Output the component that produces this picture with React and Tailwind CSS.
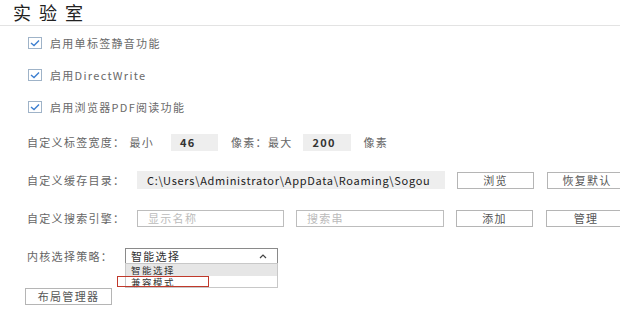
import React from "react";

const F = "font-['Noto_Sans_CJK_SC','Noto_Sans',sans-serif]";

function Check({ label }) {
  return (
    <div className="h-[32px] flex items-center pl-[28px]">
      <div className="w-[14px] h-[12px] border border-[#9fb3c8] bg-white flex items-center justify-center">
        <svg width="10" height="8" viewBox="0 0 10 8">
          <path d="M1 4 L4 6.5 L9 1.5" fill="none" stroke="#3d7fd0" strokeWidth="1.4" />
        </svg>
      </div>
      <span className="ml-[8px] text-[11px] tracking-[1.3px] text-[#6a6a6a]">{label}</span>
    </div>
  );
}

function Btn({ children, w = "w-[77px]" }) {
  return (
    <div className={`${w} h-[17px] border border-[#b5b5b5] bg-white flex items-center justify-center text-[11px] tracking-[1.3px] text-[#555] shrink-0`}>
      {children}
    </div>
  );
}

export default function App() {
  return (
    <div className={`w-[620px] h-[309px] bg-white overflow-hidden ${F}`}>
      <div className="h-[26px] border-b border-[#e3e3e3] pl-[13px] flex items-start">
        <span className="text-[18px] leading-[25px] tracking-[8px] text-[#222]">实验室</span>
      </div>
      <div className="pt-[1px]">
        <Check label="启用单标签静音功能" />
        <Check label="启用DirectWrite" />
        <Check label="启用浏览器PDF阅读功能" />
      </div>
      <div className="h-[38px] flex items-center pl-[27px] text-[11px] tracking-[1.3px] text-[#666]">
        <span>自定义标签宽度：</span>
        <span className="ml-[4px]">最小</span>
        <div className="ml-[17px] w-[47px] h-[17px] bg-[#eeeeee] flex items-center pl-[9px] text-[#333] font-semibold">46</div>
        <span className="ml-[13px]">像素：最大</span>
        <div className="ml-[10px] w-[48px] h-[17px] bg-[#eeeeee] flex items-center pl-[10px] text-[#333] font-semibold">200</div>
        <span className="ml-[13px]">像素</span>
      </div>
      <div className="h-[38px] flex items-center pl-[27px] text-[11px] tracking-[1.3px] text-[#666]">
        <span className="w-[110px] shrink-0">自定义缓存目录：</span>
        <div className="w-[308px] h-[18px] bg-[#eeeeee] flex items-center pl-[10px] text-[#222] overflow-hidden whitespace-nowrap tracking-[0.7px] shrink-0">
          C:\Users\Administrator\AppData\Roaming\Sogou
        </div>
        <div className="ml-[12px]"><Btn>浏览</Btn></div>
        <div className="ml-[13px]"><Btn w="w-[80px]">恢复默认</Btn></div>
      </div>
      <div className="h-[38px] flex items-center pl-[27px] text-[11px] tracking-[1.3px] text-[#666]">
        <span className="w-[110px] shrink-0">自定义搜索引擎：</span>
        <div className="w-[147px] h-[17px] border border-[#bdbdbd] flex items-center pl-[10px] text-[#bbb] shrink-0">显示名称</div>
        <div className="ml-[12px] w-[148px] h-[17px] border border-[#bdbdbd] flex items-center pl-[10px] text-[#bbb] shrink-0">搜索串</div>
        <div className="ml-[12px]"><Btn>添加</Btn></div>
        <div className="ml-[13px]"><Btn w="w-[80px]">管理</Btn></div>
      </div>
      <div className="h-[38px] flex items-center pl-[27px] text-[11px] tracking-[1.3px] text-[#666]">
        <span className="w-[98px] shrink-0">内核选择策略：</span>
        <div className="relative w-[153px] h-[16px] border border-[#8a8a8a] flex items-center pl-[5px] text-[#333] shrink-0">
          <span className="leading-[12px]">智能选择</span>
          <svg className="absolute right-[10px] top-[5px]" width="8" height="5" viewBox="0 0 8 5">
            <path d="M1 4 L4 1 L7 4" fill="none" stroke="#444" strokeWidth="1.2" />
          </svg>
          <div className="absolute left-[-1px] top-[14px] w-[153px] border border-[#c8c8c8] bg-white">
            <div className="h-[12px] bg-[#e6e6e6] flex items-center pl-[5px] text-[9.5px] tracking-[1.5px] text-[#333]"><span className="leading-[10px]">智能选择</span></div>
            <div className="h-[11px] flex items-center pl-[5px] text-[9.5px] tracking-[1.5px] text-[#333]"><span className="leading-[10px]">兼容模式</span></div>
          </div>
          <div className="absolute left-[-9px] top-[27px] w-[92px] h-[11px] border-[1.5px] border-[#c0392b]"></div>
        </div>
      </div>
      <div className="pl-[25px] pt-[13px]">
        <Btn w="w-[87px]">布局管理器</Btn>
      </div>
    </div>
  );
}
